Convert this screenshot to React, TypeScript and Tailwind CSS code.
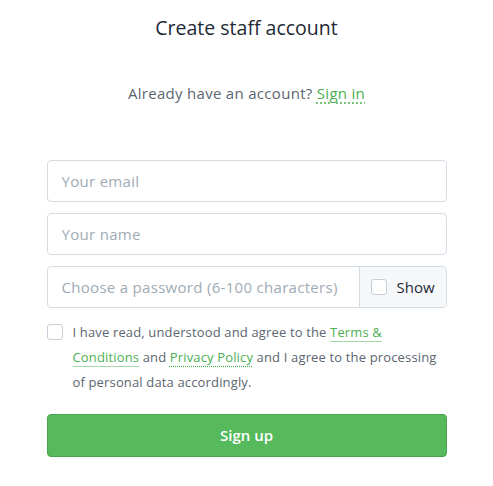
import React, { useState } from 'react';

const font = { fontFamily: '"Open Sans", sans-serif' };

export default function App() {
  const [show, setShow] = useState(false);
  const [agree, setAgree] = useState(false);

  return (
    <div className="w-[493px] h-[486px] bg-white flex flex-col items-center" style={font}>
      <h1 className="mt-[15px] text-[19.5px] leading-[26px] text-[#1f2a36]">Create staff account</h1>
      <p className="mt-[42px] text-[15px] leading-[20px] tracking-[0.3px] text-[#5b6670]">
        Already have an account?{' '}
        <a href="#" className="text-[#4db052] underline decoration-dotted decoration-[#4db052] underline-offset-[4px]">Sign in</a>
      </p>

      <form className="mt-[57px] w-[400px] flex flex-col gap-[11px]" onSubmit={(e) => e.preventDefault()}>
        <input
          className="h-[42px] w-full rounded-[4px] border border-[#d4dce4] px-[14px] text-[15px] tracking-[0.3px] text-[#1f2a36] placeholder:text-[#a0abb5] outline-none"
          placeholder="Your email"
        />
        <input
          className="h-[42px] w-full rounded-[4px] border border-[#d4dce4] px-[14px] text-[15px] tracking-[0.3px] text-[#1f2a36] placeholder:text-[#a0abb5] outline-none"
          placeholder="Your name"
        />
        <div className="flex h-[42px] rounded-[4px] border border-[#d4dce4] overflow-hidden">
          <input
            type={show ? 'text' : 'password'}
            className="flex-1 min-w-0 px-[14px] text-[15px] tracking-[0.3px] text-[#1f2a36] placeholder:text-[#a0abb5] outline-none"
            placeholder="Choose a password (6-100 characters)"
          />
          <label className="w-[87px] flex items-center gap-[10px] pl-[11px] bg-[#f5f7f9] border-l border-[#d4dce4] text-[15px] text-[#1f2a36] cursor-pointer">
            <span
              onClick={() => setShow(!show)}
              className="w-[16px] h-[16px] rounded-[3px] border border-[#c5ced7] bg-white"
            />
            Show
          </label>
        </div>

        <div className="flex gap-[10px]">
          <span
            onClick={() => setAgree(!agree)}
            className="mt-[5px] w-[16px] h-[16px] shrink-0 rounded-[3px] border border-[#c5ced7] bg-white cursor-pointer"
          />
          <p className="mt-[1px] text-[13px] leading-[25px] tracking-[0.15px] text-[#5b6670]">
            I have read, understood and agree to the{' '}
            <a href="#" className="text-[#4db052] underline decoration-[#a3d9a6] underline-offset-[4px]">Terms &amp; Conditions</a> and{' '}
            <a href="#" className="text-[#4db052] underline decoration-dotted decoration-[#4db052] underline-offset-[4px]">Privacy Policy</a> and I agree to the processing of personal data accordingly.
          </p>
        </div>

        <button
          type="submit"
          className="mt-[8px] h-[43px] w-full rounded-[4px] border border-[#48a64e] bg-[#56b95c] text-white text-[15px] font-semibold"
        >
          Sign up
        </button>
      </form>
    </div>
  );
}
